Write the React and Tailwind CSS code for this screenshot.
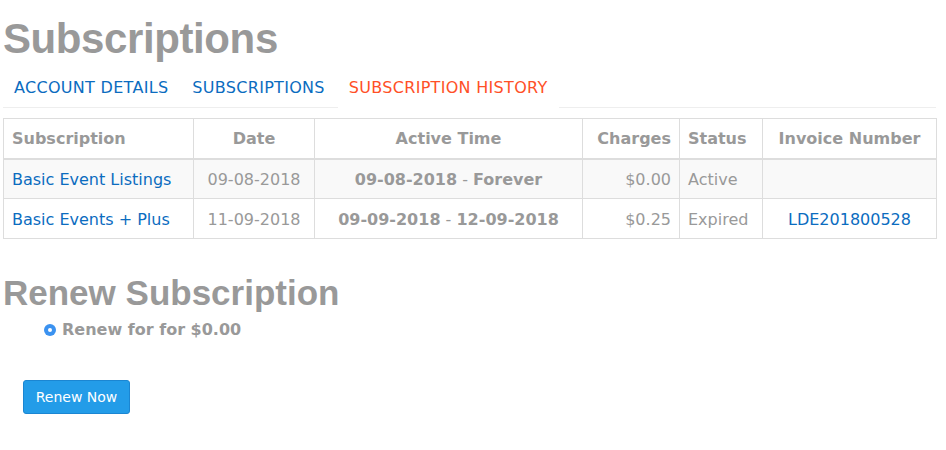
import React from "react";

const verd = { fontFamily: '"DejaVu Sans", Verdana, sans-serif' };

export default function App() {
  const rows = [
    {
      name: "Basic Event Listings",
      date: "09-08-2018",
      from: "09-08-2018",
      to: "Forever",
      charge: "$0.00",
      status: "Active",
      invoice: "",
      striped: true,
    },
    {
      name: "Basic Events + Plus",
      date: "11-09-2018",
      from: "09-09-2018",
      to: "12-09-2018",
      charge: "$0.25",
      status: "Expired",
      invoice: "LDE201800528",
      striped: false,
    },
  ];

  return (
    <div className="w-[946px] min-h-[450px] bg-white pl-[3px] pr-[10px]">
      <h1
        className="pt-[18px] text-[42px] font-bold leading-[42px] tracking-[-0.4px] text-[#999999]"
        style={{ fontFamily: '"Liberation Sans", Arial, sans-serif' }}
      >
        Subscriptions
      </h1>

      <div
        className="mt-[7px] flex border-b border-[#eeeeee] text-[16px] leading-[19px] tracking-[0.3px]"
        style={verd}
      >
        <a className="mb-[-1px] mr-[2px] border border-transparent px-[10px] py-[10px] text-[#0b6cbf]">
          ACCOUNT DETAILS
        </a>
        <a className="mb-[-1px] mr-[2px] border border-transparent px-[10px] py-[10px] text-[#0b6cbf]">
          SUBSCRIPTIONS
        </a>
        <a className="mb-[-1px] mr-[2px] border border-white bg-white px-[10px] py-[10px] text-[#ff5027]">
          SUBSCRIPTION HISTORY
        </a>
      </div>

      <table
        className="mt-[10px] w-[933px] table-fixed border-collapse text-[16px] text-[#999999]"
        style={verd}
      >
        <colgroup>
          <col className="w-[190px]" />
          <col className="w-[121px]" />
          <col className="w-[268px]" />
          <col className="w-[97px]" />
          <col className="w-[83px]" />
          <col className="w-[174px]" />
        </colgroup>
        <thead>
          <tr className="h-[40px] font-bold">
            <th className="border border-b-2 border-[#dddddd] px-[8px] pt-[1px] text-left">Subscription</th>
            <th className="border border-b-2 border-[#dddddd] px-[8px] pt-[1px] text-center">Date</th>
            <th className="border border-b-2 border-[#dddddd] px-[8px] pt-[1px] text-center">Active Time</th>
            <th className="border border-b-2 border-[#dddddd] px-[8px] pt-[1px] text-right">Charges</th>
            <th className="border border-b-2 border-[#dddddd] px-[8px] pt-[1px] text-left">Status</th>
            <th className="border border-b-2 border-[#dddddd] px-[8px] pt-[1px] text-center">Invoice Number</th>
          </tr>
        </thead>
        <tbody>
          {rows.map((r) => (
            <tr key={r.name} className={r.striped ? "h-[40px] bg-[#f9f9f9]" : "h-[40px] bg-white"}>
              <td className="border border-[#dddddd] px-[8px] pt-[2px] text-left text-[#0b6cbf]">{r.name}</td>
              <td className="border border-[#dddddd] px-[8px] pt-[2px] text-center">{r.date}</td>
              <td className="border border-[#dddddd] px-[8px] pt-[2px] text-center">
                <b>{r.from}</b> - <b>{r.to}</b>
              </td>
              <td className="border border-[#dddddd] px-[8px] pt-[2px] text-right">{r.charge}</td>
              <td className="border border-[#dddddd] px-[8px] pt-[2px] text-left">{r.status}</td>
              <td className="border border-[#dddddd] px-[8px] pt-[2px] text-center text-[#0b6cbf]">{r.invoice}</td>
            </tr>
          ))}
        </tbody>
      </table>

      <h2
        className="mt-[36px] text-[35px] font-bold leading-[35px] text-[#999999]"
        style={{ fontFamily: '"Liberation Sans", Arial, sans-serif' }}
      >
        Renew Subscription
      </h2>

      <label
        className="mt-[10px] ml-[41px] flex items-center gap-[6px] text-[16px] font-bold leading-[20px] text-[#999999]"
        style={verd}
      >
        <span className="flex h-[12px] w-[12px] items-center justify-center rounded-full bg-[#3b92f0]">
          <span className="h-[4px] w-[4px] rounded-full bg-white" />
        </span>
        Renew for for $0.00
      </label>

      <button
        className="mt-[40px] ml-[20px] h-[34px] w-[107px] rounded-[3px] border border-[#1b86d2] bg-[#239ce8] pt-[1px] text-[14px] text-white"
        style={verd}
      >
        Renew Now
      </button>
    </div>
  );
}
